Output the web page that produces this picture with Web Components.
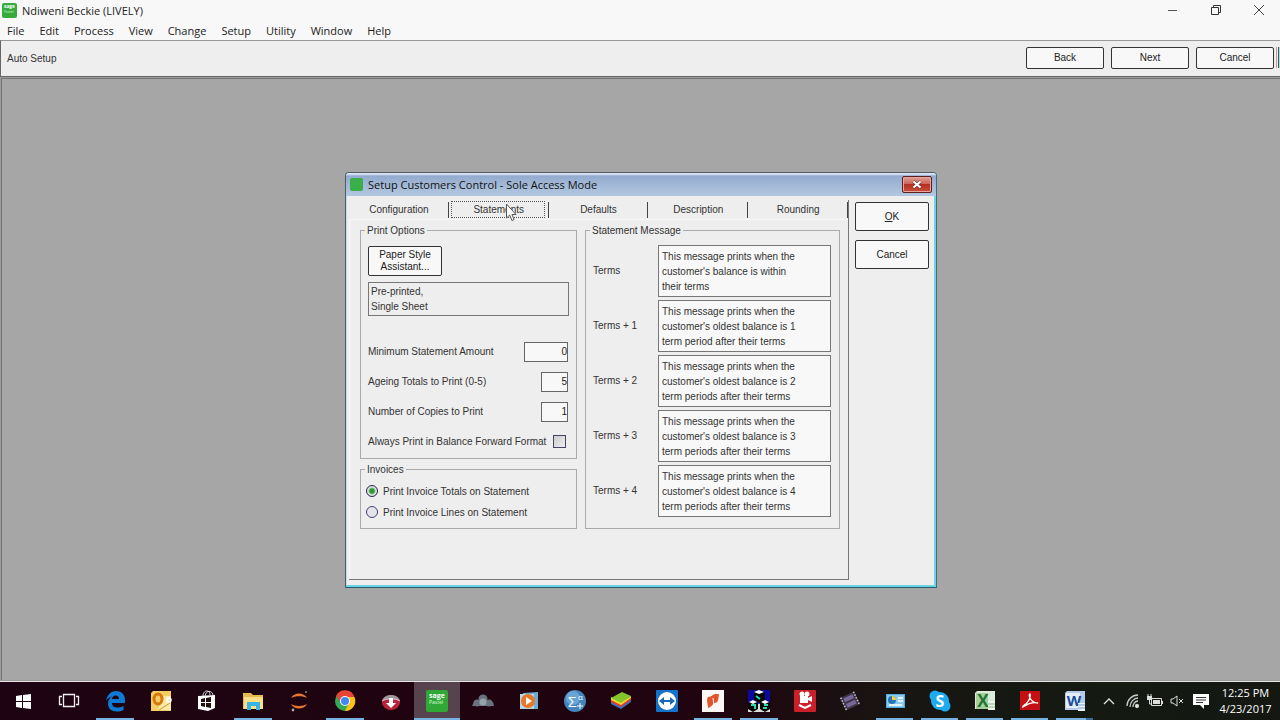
<!DOCTYPE html>
<html lang="en">
<head>
<meta charset="utf-8">
<title>Ndiweni Beckie (LIVELY)</title>
<style>
  html, body { margin: 0; height: 100%; }
  body {
    --ui: "Open Sans", "Noto Sans", sans-serif;
    --face: #eeeeee;
    font: 10px/15px "Liberation Sans", Arial, sans-serif;
    color: #333;
    overflow: hidden;
  }
</style>
</head>
<body>
<app-window>
  <title-bar slot="title">Ndiweni Beckie (LIVELY)</title-bar>
  <menu-bar slot="menu"></menu-bar>
  <wizard-bar slot="tools">Auto Setup</wizard-bar>
  <app-dialog caption="Setup Customers Control - Sole Access Mode">
    <tab-strip slot="tabs"></tab-strip>
    <print-options slot="left"></print-options>
    <invoice-options slot="left"></invoice-options>
    <group-box slot="right" legend="Statement Message">
      <message-row label="Terms" l1="This message prints when the" l2="customer's balance is within" l3="their terms"></message-row>
      <message-row label="Terms + 1" l1="This message prints when the" l2="customer's oldest balance is 1" l3="term period after their terms"></message-row>
      <message-row label="Terms + 2" l1="This message prints when the" l2="customer's oldest balance is 2" l3="term periods after their terms"></message-row>
      <message-row label="Terms + 3" l1="This message prints when the" l2="customer's oldest balance is 3" l3="term periods after their terms"></message-row>
      <message-row label="Terms + 4" l1="This message prints when the" l2="customer's oldest balance is 4" l3="term periods after their terms"></message-row>
    </group-box>
    <push-button slot="actions" class="tall"><u>O</u>K</push-button>
    <push-button slot="actions" class="tall">Cancel</push-button>
  </app-dialog>
  <task-bar slot="taskbar"></task-bar>
</app-window>

<script>
const define = (name, render) => customElements.define(name, class extends HTMLElement {
  constructor() {
    super();
    this.attachShadow({ mode: 'open' });
  }
  connectedCallback() {
    this.shadowRoot.innerHTML = '<style>:host,*{box-sizing:border-box}</style>' +
      (typeof render === 'function' ? render(this) : render);
  }
});

const sageIcon = size => `<svg width="${size}" height="${size}" viewBox="0 0 22 22" aria-hidden="true">
  <rect width="22" height="22" rx="3" fill="#35ab3c"/>
  <text x="3" y="8" font-family="Open Sans, sans-serif" font-weight="700" font-size="7" fill="#fff">sage</text>
  <text x="3" y="14" font-family="Open Sans, sans-serif" font-size="5" fill="#d8f3d8">Pastel</text></svg>`;

define('app-window', `
<style>
  :host { display: grid; grid-template-rows: auto auto auto 1fr auto; height: 100vh; background: #f8f8f8; }
  main { display: grid; place-items: center; background: #a6a6a6; border: solid #777; border-width: 1px 0 0 1px;
    margin: 1px 0 1px 1px; box-shadow: 0 0 0 1px #9b9b9b; }
</style>
<slot name="title"></slot><slot name="menu"></slot><slot name="tools"></slot>
<main><slot></slot></main>
<slot name="taskbar"></slot>`);

define('title-bar', `
<style>
  :host { display: flex; align-items: center; height: 20px; padding-left: 2px; font: 11px/18px var(--ui); color: #222; }
  .name { margin: 2px 0 0 5px; flex: 1; }
  button { border: 0; background: none; padding: 0; width: 43px; height: 20px; display: grid; place-items: center; }
  svg { display: block; }
</style>
${sageIcon(15)}
<span class="name"><slot></slot></span>
<button aria-label="Minimize"><svg width="12" height="12"><path d="M1 6.500h9" stroke="#555"/></svg></button>
<button aria-label="Restore"><svg width="12" height="12" fill="none" stroke="#333"><path d="M1.500 3.500h7v7h-7zM3.500 3.500v-2h7v7h-2"/></svg></button>
<button aria-label="Close"><svg width="12" height="12"><path d="M1 1l10 10M11 1l-10 10" stroke="#444"/></svg></button>`);

define('menu-bar', `
<style>
  :host { display: block; font: 11px/22px var(--ui); color: #222; }
  nav { display: flex; gap: 15px; padding-left: 7px; height: 20px; }
  a { color: inherit; text-decoration: none; }
</style>
<nav>${['File', 'Edit', 'Process', 'View', 'Change', 'Setup', 'Utility', 'Window', 'Help'].map(t => `<a href="#">${t}</a>`).join('')}</nav>`);

define('push-button', `
<style>
  :host { display: block; width: 78px; height: 22px; }
  :host(.tall) { width: 74px; height: 29px; }
  :host(.wide) { width: 74px; height: 30px; line-height: 12px; }
  button { width: 100%; height: 100%; padding: 0; font: inherit; color: #222; background: #f8f8f8; border: 1px solid #333; border-radius: 2px; }
</style>
<button><slot></slot></button>`);

define('wizard-bar', `
<style>
  :host { display: flex; align-items: center; gap: 7px; height: 37px; padding: 0 6px 2px 6px; background: var(--face);
    border: solid #666; border-width: 1px 0 1px 1px; border-top-color: #999; position: relative; }
  span { flex: 1; padding-top: 2px; }
  i { position: absolute; right: 0; top: 6px; width: 4px; height: 21px; border-left: 1px solid #c99;
    background: linear-gradient(90deg, #fbe6e6 1px, #555 1px 2px, #8fe8ec 2px); }
</style>
<span><slot></slot></span>
<push-button>Back</push-button><push-button>Next</push-button><push-button>Cancel</push-button><i></i>`);

define('app-dialog', host => `
<style>
  :host { display: block; width: 592px; background: var(--face); border: 1px solid #4e5a66; border-right-color: #3e6f7c; border-bottom-color: #235b6b;
    border-radius: 4px 4px 0 0; box-shadow: inset -2px -2px #6fd3e6, inset 1px 0 #c9dce6; }
  header { display: flex; align-items: center; gap: 5px; height: 23px; padding: 0 4px; border-radius: 3px 3px 0 0;
    background: linear-gradient(#dbe6f2 0 1px, #93abcf 3px, #b3c8e0); font: 11px/18px var(--ui); color: #111; }
  h1 { flex: 1; margin: 2px 0 0; font: inherit; }
  header i { width: 13px; height: 13px; border-radius: 2px; background: #39ae49; }
  header button { width: 30px; height: 17px; padding: 0; display: grid; place-items: center; border: 1px solid #5b1f22;
    border-radius: 2px; background: linear-gradient(#dda097, #cf6558 45%, #b72f22 50%, #c9503c); box-shadow: inset 0 0 0 1px #e5a59b; }
  .body { display: grid; grid-template-columns: 500px 74px; gap: 6px; padding: 4px 6px 7px 3px; }
  .pages { display: flex; flex-direction: column; height: 380px; border: solid #777; border-width: 0 1px 1px 0; }
  .page { display: grid; grid-template-columns: minmax(0, 217fr) minmax(0, 255fr); gap: 8px; padding: 3px 8px 0 10px; flex: 1; align-content: start; border: solid #f8f8f8; border-width: 1px 0 0 1px; }
  .col { display: grid; gap: 3px; align-content: start; }
  .actions { display: grid; gap: 9px; align-content: start; padding-top: 2px; }
</style>
<header><i></i><h1>${host.getAttribute('caption')}</h1>
<button aria-label="Close"><svg width="12" height="9" viewBox="0 0 12 9"><path d="M2.500 1.500l7 6M9.500 1.500l-7 6" stroke="#633" stroke-width="3.500"/><path d="M2.500 1.500l7 6M9.500 1.500l-7 6" stroke="#fff" stroke-width="2.200"/></svg></button></header>
<div class="body">
  <div class="pages"><slot name="tabs"></slot>
    <div class="page"><div class="col"><slot name="left"></slot></div><div class="col"><slot name="right"></slot></div></div>
  </div>
  <div class="actions"><slot name="actions"></slot></div>
</div>`);

define('tab-strip', `
<style>
  :host { display: block; position: relative; }
  div { display: grid; grid-template-columns: repeat(5, 1fr); height: 19px; padding: 1px 0; }
  button { font: inherit; color: inherit; padding: 0; background: none; border: 0; position: relative; }
  button::after { content: ""; position: absolute; right: 0; top: 1px; bottom: 0; border-right: 1px solid #444; }
  button[aria-selected=true]::before { content: ""; position: absolute; inset: 0 4px 0 2px; border: 1px dotted #555; }
  svg { position: absolute; left: 156px; top: 3px; }
</style>
<div role="tablist">${['Configuration', 'Statements', 'Defaults', 'Description', 'Rounding'].map((t, i) =>
  `<button role="tab" aria-selected="${i === 1}">${t}</button>`).join('')}</div>
<svg width="13" height="20" viewBox="0 0 13 20" aria-hidden="true"><path d="M1.500 1v14l3.200-3 2.200 5.500 2.200-1-2.200-5H11z" fill="#fff" stroke="#555"/></svg>`);

define('group-box', host => `
<style>
  :host { display: block; }
  fieldset { min-width: 0; margin: 0; padding: 7px 8px 11px 7px; border: 1px solid #aaa; display: block; }
  legend { padding: 0 2px; margin-left: -3px; }
  .rows { display: grid; gap: 3px; }
</style>
<fieldset><legend>${host.getAttribute('legend')}</legend><div class="rows"><slot></slot></div></fieldset>`);

define('message-row', host => `
<style>
  :host { display: grid; grid-template-columns: 1fr 173px; align-items: center; }
  textarea { display: block; width: 100%; height: 52px; margin: 0; padding: 3px; font: inherit; line-height: 15px; color: #333; background: #f8f8f8;
    border: 1px solid #777; border-radius: 0; resize: none; overflow: hidden; }
</style>
<label for="m">${host.getAttribute('label')}</label>
<textarea id="m" rows="3">${['l1', 'l2', 'l3'].map(n => host.getAttribute(n)).join('\n')}</textarea>`);

define('print-options', `
<style>
  :host { display: block; }
  .body { display: grid; padding-top: 1px; }
  output { display: block; height: 34px; margin: 6px -1px 26px 0; padding: 1px 2px; border: 1px solid #777; }
  .row { display: flex; align-items: center; justify-content: space-between; height: 20px; margin-bottom: 10px; white-space: nowrap; }
  .row:last-child { margin-bottom: -5px; }
  input { margin: 0; font: inherit; color: #222; }
  input[type=text] { width: 27px; height: 20px; padding: 0; text-align: right; background: #f8f8f8; border: 1px solid #666; border-radius: 0; }
  #min { width: 44px; }
  input[type=checkbox] { appearance: none; width: 13px; height: 13px; margin-right: 2px; border: 1px solid #446; background: linear-gradient(135deg, #ccc, #eee); }
</style>
<group-box legend="Print Options"><div class="body">
  <push-button class="wide">Paper Style<br>Assistant...</push-button>
  <output>Pre-printed,<br>Single Sheet</output>
  <div class="row"><label for="min">Minimum Statement Amount</label><input id="min" type="text" value="0"></div>
  <div class="row"><label for="age">Ageing Totals to Print (0-5)</label><input id="age" type="text" value="5"></div>
  <div class="row"><label for="copies">Number of Copies to Print</label><input id="copies" type="text" value="1"></div>
  <div class="row"><label for="fwd">Always Print in Balance Forward Format</label><input id="fwd" type="checkbox"></div>
</div></group-box>`);

define('invoice-options', `
<style>
  :host { display: block; }
  .body { display: grid; gap: 6px; margin: 0 -2px -3px; }
  label { display: flex; align-items: center; gap: 5px; }
  input { appearance: none; width: 12px; height: 12px; margin: 0; border: 1px solid #447; border-radius: 50%; background: #e4e4ea; }
  input:checked { background: radial-gradient(circle, #2c9a2c 0 2px, #e4e4ea 4px); border-color: #224; }
</style>
<group-box legend="Invoices"><div class="body">
  <label><input type="radio" name="inv" checked>Print Invoice Totals on Statement</label>
  <label><input type="radio" name="inv">Print Invoice Lines on Statement</label>
</div></group-box>`);

const apps = [
  ['Start', '', '<path d="M4 6l6-1v6H4zM11 5l8-1v7h-8zM4 12h6v6l-6-1zM11 12h8v7l-8-1z" fill="#fff"/>'],
  ['Task View', '', '<path d="M5.500 4.500h11v12h-11zM4 6.500H1.500v8H4M18 6.500h2.500v8H18" fill="none" stroke="#eee" stroke-width="1.300"/>'],
  ['Edge', 'run', '<path d="M2 11C3 5 7 1 12 1c6 0 9 4 9 9v3H8c0 3 2 4.500 5 4.500 2.500 0 4.500-.5 6.500-1.500v4c-2 1-4 1.500-7 1.500-5 0-8.500-3-8.500-8 0-3 1.500-5.500 4-7-3 .5-5 2.500-6 4.500zM8 9h7c0-2-1-3.500-3.500-3.500C9.500 5.500 8.500 7 8 9z" fill="#0e7ad6"/>'],
  ['Outlook', '', '<path d="M3 1h18v20H1V3z" fill="#f3ce62"/><path d="M13 6h8v14H8z" fill="#fae9a8"/><ellipse cx="8" cy="9" rx="4" ry="5" fill="none" stroke="#d8770f" stroke-width="3"/><circle cx="19" cy="10" r="2" fill="none" stroke="#fff" stroke-width="1.500"/><path d="M9 20l11-7" stroke="#c99a2e"/>'],
  ['Store', '', '<path d="M2 6l17-1v13l-7 3-10-2z" fill="#fff"/><path d="M7 6c0-6 7-7 7-1M9 6c1-6 7-6 8-1" fill="none" stroke="#ddd"/><path d="M5 9l4-1v4H5zM10 8l5-1v5h-5zM5 13h4v4l-4-1zM10 13h5v5l-5-1z" fill="#211"/>'],
  ['File Explorer', 'run', '<path d="M1 3h8l2 2h10v14H1z" fill="#e8b94f"/><path d="M2 7h19v12H2z" fill="#fbdf86"/><path d="M5 12h13v8h-4v-4H9v4H5z" fill="#35b5e4"/>'],
  ['Jupyter', '', '<path d="M3 8c3-6 13-6 16 0-4-2.500-12-2.500-16 0zM3 14c4 2.500 12 2.500 16 0-3 6-13 6-16 0z" fill="#e87530"/><circle cx="18" cy="2" r="1" fill="#888"/><circle cx="5" cy="20" r="1.400" fill="#aaa"/>'],
  ['Chrome', 'run', '<circle cx="11" cy="11" r="10" fill="#35a853"/><path d="M2 6a10 10 0 0 1 18.500 1H11z" fill="#e84335"/><path d="M20.500 7A10 10 0 0 1 11 21l4-8-1-6z" fill="#fbc116"/><path d="M2 6l6 8 3-7z" fill="#e84335"/><circle cx="11" cy="11" r="5" fill="#fff"/><circle cx="11" cy="11" r="4" fill="#4285f4"/>'],
  ['Download manager', '', '<ellipse cx="11" cy="12.500" rx="9" ry="7.500" fill="#b8243a"/><path d="M2 11c2-8 16-8 18 0-5-2-13-2-18 0z" fill="#999"/><path d="M2 11c5-3 13-3 18 0" stroke="#eac" fill="none" stroke-width="1"/><path d="M9 8h4v5h3l-5 5-5-5h3z" fill="#fff"/>'],
  ['Pastel', 'run active', '<rect x="0" y="0" width="22" height="22" rx="2" fill="#2fa836"/><text x="3" y="8" font-size="7" font-weight="700" fill="#fff">sage</text><text x="3" y="14" font-size="5" fill="#dfd">Pastel</text>'],
  ['Cloud', '', '<g fill="#69737d"><circle cx="5" cy="13" r="3.500"/><circle cx="17" cy="13" r="3.500"/><circle cx="11" cy="9" r="4.500"/><path d="M2 12h19l1 4H0z"/></g><circle cx="11" cy="12" r="3.500" fill="#95a0a8"/>'],
  ['Media Player', '', '<path d="M5 3l15-1v17H7z" fill="#71add3"/><path d="M2 4h14v15H2z" fill="#b7d7e9"/><circle cx="10" cy="11" r="7" fill="#e87828"/><path d="M8 7l6 4-6 4z" fill="#fff"/>'],
  ['Statistics', '', '<circle cx="11" cy="11" r="11" fill="#4484bd"/><circle cx="9" cy="8" r="7" fill="#68a5d6"/><text x="4" y="17" font-size="15" fill="#fff">Σ</text><text x="14" y="10" font-size="8" fill="#fff">α</text><path d="M16 13v6M13 16h6" stroke="#fff"/>'],
  ['BlueStacks', '', '<path d="M1 14l10 5 10-7v-2L11 16 1 11z" fill="#386ec7"/><path d="M1 12l10 5 10-7V8L11 14 1 9z" fill="#e33c2b"/><path d="M1 10l10 5 10-7V6L11 12 1 7z" fill="#f4d832"/><path d="M1 8l11-6 9 4-10 7z" fill="#83c62b"/>'],
  ['TeamViewer', '', '<rect width="22" height="22" rx="1" fill="#1572ca"/><circle cx="11" cy="11" r="9" fill="#fff"/><path d="M3 11l5-4v3h6V7l5 4-5 4v-3H8v3z" fill="#1768b5"/>'],
  ['Nitro', 'run', '<path d="M0 0h22v22H0z" fill="#faf7f4"/><path d="M6 7c4 0 5-3 7-3h4c-1 5 0 8-4 9-2 0-3 4-7 5 0-4-2-8 0-11z" fill="#e35428"/><path d="M11 8l1 8" stroke="#fff"/>'],
  ['Visual tools', 'run', '<path d="M0 0h22v22H0z" fill="#0a0aa0"/><path d="M0 15l5-4 6 3 6-3 5 4v7H0z" fill="#ddd"/><path d="M6 3l6-3 5 3v7l-5 3-6-3zM0 13l5-3 5 3v6l-5 3-5-3zM12 13l5-3 5 3v6l-5 3-5-3z" fill="#060606"/><path d="M8 6l4 3M3 15h4v4M16 15h4M15 18h4" stroke="#28ddb0" stroke-width="2" fill="none"/><path d="M6 2l5-2 5 2-5 2zM1 12l4-2 4 2-4 2zM13 12l4-2 4 2-4 2z" fill="#fff"/>'],
  ['Recorder', 'late', '<rect width="22" height="22" rx="1" fill="#c9202b"/><path d="M6 6h8v7H6zM14 8l4-2v6l-4-2z" fill="#fff"/><circle cx="8" cy="4" r="2.500" fill="#fff"/><circle cx="13" cy="4" r="2.500" fill="#fff"/><path d="M5 15l6 3 6-3" stroke="#fff" stroke-width="2" fill="none"/>'],
  ['Movie Maker', 'late', '<g transform="rotate(-25 11 11)"><path d="M3 4h16v14H3z" fill="#3a3542"/><path d="M6 6h10v4H6zM6 12h10v4H6z" fill="#77679a"/><path d="M4 4v14M18 4v14" stroke="#c9c3d3" stroke-width="1.500" stroke-dasharray="1.500 1.500"/></g>'],
  ['Control Panel', 'late run', '<path d="M2 4h19v14H2z" fill="#53abe0"/><path d="M3 5h17v12H3z" fill="#8bcbed"/><circle cx="8" cy="10" r="4" fill="#2774b8"/><path d="M8 10V6a4 4 0 0 1 4 4z" fill="#f5cf3d"/><path d="M14 8h5M14 11h5M5 15h13" stroke="#fff" stroke-width="1.500"/>'],
  ['Skype', 'late run', '<circle cx="11" cy="11" r="9" fill="#1eacee"/><circle cx="6" cy="6" r="5.500" fill="#1eacee"/><circle cx="16" cy="16" r="5.500" fill="#1eacee"/><text x="11" y="17" font-size="16" font-weight="700" text-anchor="middle" fill="#fff">S</text>'],
  ['Excel', 'late run', '<path d="M3 1h18v18H1V3z" fill="#dcebd7"/><path d="M2 3h12v16H2z" fill="#a5cf98"/><text x="9" y="17" font-size="17" font-weight="700" text-anchor="middle" fill="#237337">X</text><path d="M14 11h7v9h-7z" fill="#edf6eb"/><path d="M14 14h7M14 17h7" stroke="#87b984"/>'],
  ['Acrobat', 'late run', '<path d="M1 1h20v19H1z" fill="#c60f13"/><path d="M4 16c5-2 8-9 7-12-2 0 0 9 8 9-4-1-9 0-15 4z" fill="none" stroke="#fff" stroke-width="1.300"/>'],
  ['Word', 'late run stacked', '<path d="M3 1h18v19H1V3z" fill="#b4cae8"/><path d="M2 3h14v15H2z" fill="#e4edf8"/><text x="10" y="16" font-size="15" font-weight="700" text-anchor="middle" fill="#174f9e">W</text><path d="M14 13h7v8h-7z" fill="#e8f0fa"/><path d="M14 15h7M14 18h7" stroke="#7ba0ce"/>']
];

define('task-item', host => `
<style>
  :host { display: block; flex: 0 0 46px; }
  :host(.late) { flex-basis: 45px; }
  button { display: grid; place-items: center; position: relative; width: 100%; height: 100%; padding: 0; border: 0; background: none; }
  :host(.active) button { background: #57434e; }
  :host(.run) button::after { content: ""; position: absolute; left: 4px; right: 4px; bottom: 0; height: 2px; background: #76b3e3; }
  :host(.active) button::after { left: 0; right: 0; }
  :host(.stacked) button::after { border-right: 7px solid #3d6b94; }
  svg { overflow: visible; }
</style>
<button aria-label="${host.getAttribute('label')}"><svg width="22" height="22" viewBox="0 0 22 22" font-family="Open Sans, sans-serif">${host.icon}</svg></button>`);

define('task-bar', `
<style>
  :host { display: flex; height: 39px; border-top: 1px solid #e6e6e6; background: linear-gradient(90deg, #1e0412, #20040f 55%, #181512 70%, #141a12 85%, #151713);
    color: #fff; font: 11px/16px var(--ui); }
  .apps { display: flex; flex: 1; min-width: 0; }
  .tray { display: flex; align-items: center; gap: 5px; }
  .tray button { width: 17px; height: 22px; padding: 0; border: 0; background: none; display: grid; place-items: center; }
  .tray button:first-child { margin-right: 2px; }
  .tray button:nth-child(5) { margin-left: 2px; }
  svg { overflow: visible; }
  time { width: 63px; text-align: center; white-space: nowrap; margin-right: 3px; }
</style>
<div class="apps"></div>
<div class="tray">
  <button aria-label="Show hidden icons"><svg width="12" height="12"><path d="M1 9l5-5 5 5" fill="none" stroke="#ddd" stroke-width="1.400"/></svg></button>
  <button aria-label="Network"><svg width="14" height="14" fill="none" stroke="#ccc" stroke-width="1.300"><path d="M1 12C1 6 6 1 12 1M4 13c0-5 4-9 8-9M7 13c0-3 2-6 5-6"/><circle cx="11" cy="12" r="1.500" fill="#fff"/></svg></button>
  <button aria-label="Battery"><svg width="16" height="14"><path d="M4.500 4.500h10v7h-10z" fill="none" stroke="#ddd"/><path d="M6 6h7v4H6zM15 7h1v3h-1zM0 2h5v4H0z" fill="#ddd"/><path d="M2.500 5v5h2M1 0v2M4 0v2" stroke="#ddd" fill="none"/></svg></button>
  <button aria-label="Volume muted"><svg width="14" height="12" fill="none" stroke="#ddd"><path d="M1 4h2l4-3v10L3 8H1zM9 4l4 4M13 4l-4 4"/></svg></button>
  <button aria-label="Notifications"><svg width="16" height="16"><path d="M0 1h16v11h-5v4l-4-4H0z" fill="#fff"/><path d="M3 4.500h10M3 7h10M3 9.500h7" stroke="#333"/></svg></button>
  <time datetime="2017-04-23T12:25">12:25 PM<br>4/23/2017</time>
</div>`);

const bar = document.querySelector('task-bar');
bar.shadowRoot.querySelector('.apps').append(...apps.map(([label, cls, icon]) => {
  const item = document.createElement('task-item');
  item.icon = icon;
  item.setAttribute('label', label);
  item.className = cls;
  return item;
}));
</script>
</body>
</html>
